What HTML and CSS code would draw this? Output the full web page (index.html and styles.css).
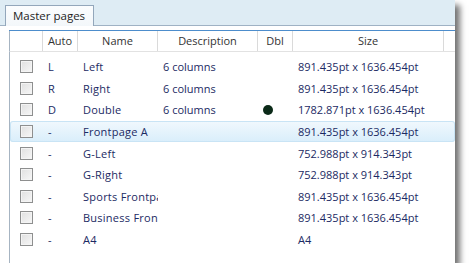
FILE: index.html
```html
<!DOCTYPE html>
<html lang="en">
<head>
    <meta charset="UTF-8">
    <title>Master pages</title>
    <link rel="stylesheet" href="styles.css">
</head>
<body>
    <div class="window">
        <!-- Tab strip -->
        <div class="tabstrip">
            <div class="tab">Master pages</div>
        </div>

        <div class="panel">
            <div class="grid">
                <div class="head">
                    <div class="hcell"></div>
                    <div class="hcell">Auto</div>
                    <div class="hcell">Name</div>
                    <div class="hcell">Description</div>
                    <div class="hcell">Dbl</div>
                    <div class="hcell">Size</div>
                    <div class="hcell last"></div>
                </div>

                <div class="rows">
                    <div class="row">
                        <div class="cell"><span class="check"></span></div>
                        <div class="cell">L</div>
                        <div class="cell name">Left</div>
                        <div class="cell">6 columns</div>
                        <div class="cell"></div>
                        <div class="cell">891.435pt x 1636.454pt</div>
                    </div>
                    <div class="row">
                        <div class="cell"><span class="check"></span></div>
                        <div class="cell">R</div>
                        <div class="cell name">Right</div>
                        <div class="cell">6 columns</div>
                        <div class="cell"></div>
                        <div class="cell">891.435pt x 1636.454pt</div>
                    </div>
                    <div class="row">
                        <div class="cell"><span class="check"></span></div>
                        <div class="cell">D</div>
                        <div class="cell name">Double</div>
                        <div class="cell">6 columns</div>
                        <div class="cell"><span class="dot"></span></div>
                        <div class="cell">1782.871pt x 1636.454pt</div>
                    </div>
                    <div class="row selected">
                        <div class="cell"><span class="check"></span></div>
                        <div class="cell">-</div>
                        <div class="cell name">Frontpage A</div>
                        <div class="cell"></div>
                        <div class="cell"></div>
                        <div class="cell">891.435pt x 1636.454pt</div>
                    </div>
                    <div class="row">
                        <div class="cell"><span class="check"></span></div>
                        <div class="cell">-</div>
                        <div class="cell name">G-Left</div>
                        <div class="cell"></div>
                        <div class="cell"></div>
                        <div class="cell">752.988pt x 914.343pt</div>
                    </div>
                    <div class="row">
                        <div class="cell"><span class="check"></span></div>
                        <div class="cell">-</div>
                        <div class="cell name">G-Right</div>
                        <div class="cell"></div>
                        <div class="cell"></div>
                        <div class="cell">752.988pt x 914.343pt</div>
                    </div>
                    <div class="row">
                        <div class="cell"><span class="check"></span></div>
                        <div class="cell">-</div>
                        <div class="cell name">Sports Frontpage</div>
                        <div class="cell"></div>
                        <div class="cell"></div>
                        <div class="cell">891.435pt x 1636.454pt</div>
                    </div>
                    <div class="row">
                        <div class="cell"><span class="check"></span></div>
                        <div class="cell">-</div>
                        <div class="cell name">Business Frontpage</div>
                        <div class="cell"></div>
                        <div class="cell"></div>
                        <div class="cell">891.435pt x 1636.454pt</div>
                    </div>
                    <div class="row">
                        <div class="cell"><span class="check"></span></div>
                        <div class="cell">-</div>
                        <div class="cell name">A4</div>
                        <div class="cell"></div>
                        <div class="cell"></div>
                        <div class="cell">A4</div>
                    </div>
                </div>
            </div>
        </div>
    </div>
</body>
</html>
```

FILE: styles.css
```css
body {
    margin: 0;
    background-color: #fff;
    font-family: "Open Sans", "Noto Sans", sans-serif;
    font-size: 11px;
}
.window {
    width: 455px;
    height: 263px;
    overflow: hidden;
    background-color: #fff;
    box-shadow: 5px 5px 6px rgba(0, 0, 0, 0.55);
}
.tabstrip {
    height: 26px;
    background-color: #deecf4;
    border-bottom: 1px solid #9fb2c4;
    display: flex;
    align-items: flex-end;
    box-sizing: border-box;
}
.tab {
    margin-left: 5px;
    margin-bottom: -1px;
    height: 21px;
    padding: 0 8px 0 7px;
    border: 1px solid #93a7bb;
    border-bottom: none;
    background: linear-gradient(#fbfdfe, #f3f7fa);
    color: #1e1e1e;
    font-size: 11.5px;
    line-height: 20px;
    box-sizing: border-box;
}
.panel {
    padding-top: 4px;
}
.grid {
    margin-left: 9px;
    border-top: 1px solid #4d8dcc;
}
.head, .row {
    display: grid;
    grid-template-columns: 33px 35px 80px 100px 35px 151px 1fr;
}
.head {
    height: 21px;
    border-bottom: 1px solid #e2e2e2;
    border-left: 1px solid #a6b4c2;
    box-sizing: border-box;
    color: #333;
}
.hcell {
    border-right: 1px solid #dadada;
    text-align: center;
    line-height: 20px;
}
.hcell.last {
    border-right: none;
}
.rows {
    border-left: 1px solid #a6b4c2;
    padding-top: 4px;
    height: 220px;
}
.row {
    height: 21.6px;
    align-items: center;
    color: #1b2a63;
}
.cell {
    padding-left: 5px;
    padding-right: 6px;
    white-space: nowrap;
    overflow: hidden;
}
.cell.name {
    padding-right: 8px;
    letter-spacing: 0.25px;
}
.cell:first-child {
    padding-left: 10px;
    padding-right: 0;
}
.row.selected {
    background: linear-gradient(#f1f8fd, #d9eefb);
    box-shadow: inset 0 0 0 1px #c9e4f5;
    border-radius: 3px;
}
.check {
    display: block;
    width: 13px;
    height: 13px;
    box-sizing: border-box;
    border: 1px solid #8e8f8f;
    background: linear-gradient(135deg, #e0e0e0, #f7f7f7);
    box-shadow: inset 0 0 0 1px #f4f4f4;
}
.dot {
    display: block;
    width: 10px;
    height: 10px;
    border-radius: 50%;
    background-color: #0b2a18;
}
```
